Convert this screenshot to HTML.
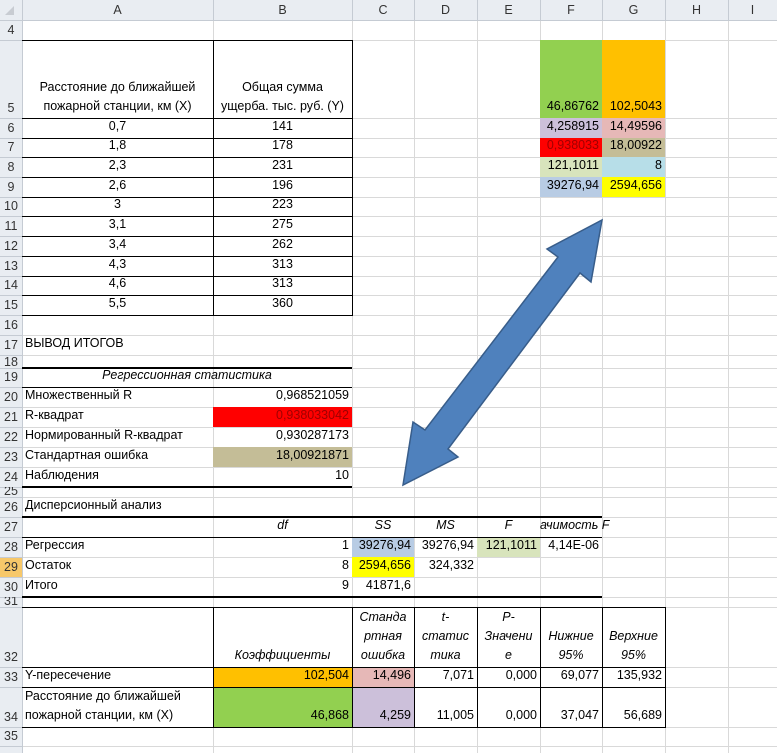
<!DOCTYPE html>
<html><head><meta charset="utf-8"><style>
*{margin:0;padding:0;box-sizing:border-box}
body{width:777px;height:753px;overflow:hidden;background:#fff;position:relative;font-family:"Liberation Sans",Calibri,sans-serif;font-size:12.5px;color:#000}
.c{position:absolute;display:flex;align-items:flex-end;padding:0 3px 2px 3px;white-space:nowrap;line-height:19px}
.r{justify-content:flex-end}.m{justify-content:center;text-align:center}.i{font-style:italic}
.f{position:absolute}
.h{position:absolute;color:#333;font-size:12.5px;display:flex;align-items:flex-end;justify-content:center;padding-bottom:2px;line-height:16px}
</style></head><body>
<svg class="f" style="left:0;top:0" width="777" height="753">
<g stroke="#d9d9d9" stroke-width="1">
<line x1="213.5" y1="20" x2="213.5" y2="753"/><line x1="352.5" y1="20" x2="352.5" y2="753"/><line x1="414.5" y1="20" x2="414.5" y2="753"/><line x1="477.5" y1="20" x2="477.5" y2="753"/><line x1="540.5" y1="20" x2="540.5" y2="753"/><line x1="602.5" y1="20" x2="602.5" y2="753"/><line x1="665.5" y1="20" x2="665.5" y2="753"/><line x1="728.5" y1="20" x2="728.5" y2="753"/>
<path d="M22 40.5H777M22 118.5H777M22 138.5H777M22 157.5H777M22 177.5H777M22 197.5H777M22 216.5H777M22 236.5H777M22 256.5H777M22 276.5H777M22 295.5H777M22 315.5H777M22 335.5H777M22 355.5H777M22 368.5H777M22 387.5H777M22 407.5H777M22 427.5H777M22 447.5H777M22 467.5H777M22 487.5H777M22 497.5H777M22 517.5H777M22 537.5H777M22 557.5H777M22 577.5H777M22 597.5H777M22 607.5H777M22 667.5H777M22 687.5H777M22 727.5H777M22 746.5H777"/>
</g>
<rect x="0" y="0" width="777" height="20" fill="#e9edf2"/>
<rect x="0" y="0" width="22" height="753" fill="#e9edf2"/>
<rect x="0" y="557" width="22" height="20" fill="#f7c86a"/>
<g stroke="#c5cbd3" stroke-width="1">
<line x1="0" y1="20.5" x2="777" y2="20.5"/><line x1="22.5" y1="0" x2="22.5" y2="753"/>
<path d="M213.5 0V20M352.5 0V20M414.5 0V20M477.5 0V20M540.5 0V20M602.5 0V20M665.5 0V20M728.5 0V20"/>
<path d="M0 40.5H22M0 118.5H22M0 138.5H22M0 157.5H22M0 177.5H22M0 197.5H22M0 216.5H22M0 236.5H22M0 256.5H22M0 276.5H22M0 295.5H22M0 315.5H22M0 335.5H22M0 355.5H22M0 368.5H22M0 387.5H22M0 407.5H22M0 427.5H22M0 447.5H22M0 467.5H22M0 487.5H22M0 497.5H22M0 517.5H22M0 537.5H22M0 557.5H22M0 577.5H22M0 597.5H22M0 607.5H22M0 667.5H22M0 687.5H22M0 727.5H22M0 746.5H22"/>
</g>
<path d="M14 6L14 15L5 15Z" fill="#c8ccd2"/>
<!-- fills -->
<rect x="540" y="40" width="62" height="78" fill="#92d050"/>
<rect x="602" y="40" width="63" height="78" fill="#ffc000"/>
<rect x="540" y="118" width="62" height="20" fill="#ccc0da"/>
<rect x="602" y="118" width="63" height="20" fill="#e6b8b7"/>
<rect x="540" y="138" width="62" height="19" fill="#ff0000"/>
<rect x="602" y="138" width="63" height="19" fill="#c4bd97"/>
<rect x="540" y="157" width="62" height="20" fill="#d8e4bc"/>
<rect x="602" y="157" width="63" height="20" fill="#b7dee8"/>
<rect x="540" y="177" width="62" height="20" fill="#b8cce4"/>
<rect x="602" y="177" width="63" height="20" fill="#ffff00"/>
<rect x="213" y="407" width="139" height="20" fill="#ff0000"/>
<rect x="213" y="447" width="139" height="20" fill="#c4bd97"/>
<rect x="352" y="537" width="62" height="20" fill="#b8cce4"/>
<rect x="352" y="557" width="62" height="20" fill="#ffff00"/>
<rect x="477" y="537" width="63" height="20" fill="#d8e4bc"/>
<rect x="213" y="667" width="139" height="20" fill="#ffc000"/>
<rect x="352" y="667" width="62" height="20" fill="#e6b8b7"/>
<rect x="213" y="687" width="139" height="40" fill="#92d050"/>
<rect x="352" y="687" width="62" height="40" fill="#ccc0da"/>
<!-- borders -->
<g stroke="#000" stroke-width="1" fill="none">
<path d="M22 40.5H352.5M22 118.5H352M22 138.5H352M22 157.5H352M22 177.5H352M22 197.5H352M22 216.5H352M22 236.5H352M22 256.5H352M22 276.5H352M22 295.5H352M22 315.5H352"/>
<path d="M213.5 40V316M352.5 40V316"/>
<path d="M22 387.5H352"/>
<path d="M22 537.5H602"/>
<path d="M22 607.5H665.5M22 667.5H665M22 687.5H665M22 727.5H665.5"/>
<path d="M213.5 607V728M352.5 607V728M414.5 607V728M477.5 607V728M540.5 607V728M602.5 607V728M665.5 607V728"/>
</g>
<g stroke="#000" stroke-width="2">
<path d="M22 368H352M22 487H352M22 517H602M22 597H602"/>
</g>
<polygon points="602,220 591,282 580,273 448,449 458,457 403,485 413,422 425,430 558,257 547,249" fill="#4f81bd" stroke="#385d8a" stroke-width="1.5" stroke-linejoin="miter"/>
</svg>

<!-- column headers -->
<div class="h" style="left:22px;top:0;width:191px;height:20px">A</div>
<div class="h" style="left:213px;top:0;width:139px;height:20px">B</div>
<div class="h" style="left:352px;top:0;width:62px;height:20px">C</div>
<div class="h" style="left:414px;top:0;width:63px;height:20px">D</div>
<div class="h" style="left:477px;top:0;width:63px;height:20px">E</div>
<div class="h" style="left:540px;top:0;width:62px;height:20px">F</div>
<div class="h" style="left:602px;top:0;width:63px;height:20px">G</div>
<div class="h" style="left:665px;top:0;width:63px;height:20px">H</div>
<div class="h" style="left:728px;top:0;width:49px;height:20px">I</div>
<!-- row headers -->
<div class="h" style="left:0;top:21px;width:22px;height:19px">4</div>
<div class="h" style="left:0;top:40px;width:22px;height:78px">5</div>
<div class="h" style="left:0;top:118px;width:22px;height:20px">6</div>
<div class="h" style="left:0;top:138px;width:22px;height:19px">7</div>
<div class="h" style="left:0;top:157px;width:22px;height:20px">8</div>
<div class="h" style="left:0;top:177px;width:22px;height:20px">9</div>
<div class="h" style="left:0;top:197px;width:22px;height:19px">10</div>
<div class="h" style="left:0;top:216px;width:22px;height:20px">11</div>
<div class="h" style="left:0;top:236px;width:22px;height:20px">12</div>
<div class="h" style="left:0;top:256px;width:22px;height:20px">13</div>
<div class="h" style="left:0;top:276px;width:22px;height:19px">14</div>
<div class="h" style="left:0;top:295px;width:22px;height:20px">15</div>
<div class="h" style="left:0;top:315px;width:22px;height:20px">16</div>
<div class="h" style="left:0;top:335px;width:22px;height:20px">17</div>
<div class="h" style="left:0;top:355px;width:22px;height:13px;padding-bottom:0;line-height:12px">18</div>
<div class="h" style="left:0;top:368px;width:22px;height:19px">19</div>
<div class="h" style="left:0;top:387px;width:22px;height:20px">20</div>
<div class="h" style="left:0;top:407px;width:22px;height:20px">21</div>
<div class="h" style="left:0;top:427px;width:22px;height:20px">22</div>
<div class="h" style="left:0;top:447px;width:22px;height:20px">23</div>
<div class="h" style="left:0;top:467px;width:22px;height:20px">24</div>
<div class="h" style="left:0;top:487px;width:22px;height:10px;padding:0;line-height:8px;overflow:hidden;align-items:flex-start">25</div>
<div class="h" style="left:0;top:497px;width:22px;height:20px">26</div>
<div class="h" style="left:0;top:517px;width:22px;height:20px">27</div>
<div class="h" style="left:0;top:537px;width:22px;height:20px">28</div>
<div class="h" style="left:0;top:557px;width:22px;height:20px">29</div>
<div class="h" style="left:0;top:577px;width:22px;height:20px">30</div>
<div class="h" style="left:0;top:597px;width:22px;height:10px;padding:0;line-height:8px;overflow:hidden;align-items:flex-start">31</div>
<div class="h" style="left:0;top:607px;width:22px;height:60px">32</div>
<div class="h" style="left:0;top:667px;width:22px;height:20px">33</div>
<div class="h" style="left:0;top:687px;width:22px;height:40px">34</div>
<div class="h" style="left:0;top:727px;width:22px;height:19px">35</div>

<!-- row 5 -->
<div class="c m" style="left:22px;top:40px;width:191px;height:78px">Расстояние до ближайшей<br>пожарной станции, км (X)</div>
<div class="c m" style="left:213px;top:40px;width:139px;height:78px">Общая сумма<br>ущерба. тыс. руб. (Y)</div>
<div class="c r" style="left:540px;top:40px;width:62px;height:78px">46,86762</div>
<div class="c r" style="left:602px;top:40px;width:63px;height:78px">102,5043</div>
<!-- data -->
<div class="c m" style="left:22px;top:118px;width:191px;height:20px">0,7</div><div class="c m" style="left:213px;top:118px;width:139px;height:20px">141</div>
<div class="c m" style="left:22px;top:138px;width:191px;height:19px">1,8</div><div class="c m" style="left:213px;top:138px;width:139px;height:19px">178</div>
<div class="c m" style="left:22px;top:157px;width:191px;height:20px">2,3</div><div class="c m" style="left:213px;top:157px;width:139px;height:20px">231</div>
<div class="c m" style="left:22px;top:177px;width:191px;height:20px">2,6</div><div class="c m" style="left:213px;top:177px;width:139px;height:20px">196</div>
<div class="c m" style="left:22px;top:197px;width:191px;height:19px">3</div><div class="c m" style="left:213px;top:197px;width:139px;height:19px">223</div>
<div class="c m" style="left:22px;top:216px;width:191px;height:20px">3,1</div><div class="c m" style="left:213px;top:216px;width:139px;height:20px">275</div>
<div class="c m" style="left:22px;top:236px;width:191px;height:20px">3,4</div><div class="c m" style="left:213px;top:236px;width:139px;height:20px">262</div>
<div class="c m" style="left:22px;top:256px;width:191px;height:20px">4,3</div><div class="c m" style="left:213px;top:256px;width:139px;height:20px">313</div>
<div class="c m" style="left:22px;top:276px;width:191px;height:19px">4,6</div><div class="c m" style="left:213px;top:276px;width:139px;height:19px">313</div>
<div class="c m" style="left:22px;top:295px;width:191px;height:20px">5,5</div><div class="c m" style="left:213px;top:295px;width:139px;height:20px">360</div>
<!-- F/G small table -->
<div class="c r" style="left:540px;top:118px;width:62px;height:20px">4,258915</div><div class="c r" style="left:602px;top:118px;width:63px;height:20px">14,49596</div>
<div class="c r" style="left:540px;top:138px;width:62px;height:19px;color:#a00000">0,938033</div><div class="c r" style="left:602px;top:138px;width:63px;height:19px">18,00922</div>
<div class="c r" style="left:540px;top:157px;width:62px;height:20px">121,1011</div><div class="c r" style="left:602px;top:157px;width:63px;height:20px">8</div>
<div class="c r" style="left:540px;top:177px;width:62px;height:20px">39276,94</div><div class="c r" style="left:602px;top:177px;width:63px;height:20px">2594,656</div>
<!-- summary -->
<div class="c" style="left:22px;top:335px;width:191px;height:20px">ВЫВОД ИТОГОВ</div>
<div class="c m i" style="left:22px;top:368px;width:330px;height:19px">Регрессионная статистика</div>
<div class="c" style="left:22px;top:387px;width:191px;height:20px">Множественный R</div><div class="c r" style="left:213px;top:387px;width:139px;height:20px">0,968521059</div>
<div class="c" style="left:22px;top:407px;width:191px;height:20px">R-квадрат</div><div class="c r" style="left:213px;top:407px;width:139px;height:20px;color:#a00000">0,938033042</div>
<div class="c" style="left:22px;top:427px;width:191px;height:20px">Нормированный R-квадрат</div><div class="c r" style="left:213px;top:427px;width:139px;height:20px">0,930287173</div>
<div class="c" style="left:22px;top:447px;width:191px;height:20px">Стандартная ошибка</div><div class="c r" style="left:213px;top:447px;width:139px;height:20px">18,00921871</div>
<div class="c" style="left:22px;top:467px;width:191px;height:20px">Наблюдения</div><div class="c r" style="left:213px;top:467px;width:139px;height:20px">10</div>
<!-- ANOVA -->
<div class="c" style="left:22px;top:497px;width:191px;height:20px">Дисперсионный анализ</div>
<div class="c m i" style="left:213px;top:517px;width:139px;height:20px">df</div>
<div class="c m i" style="left:352px;top:517px;width:62px;height:20px">SS</div>
<div class="c m i" style="left:414px;top:517px;width:63px;height:20px">MS</div>
<div class="c m i" style="left:477px;top:517px;width:63px;height:20px">F</div>
<div class="c i" style="left:538px;top:517px;width:80px;height:20px;padding-left:2px">ачимость F</div>
<div class="c" style="left:22px;top:537px;width:191px;height:20px">Регрессия</div><div class="c r" style="left:213px;top:537px;width:139px;height:20px">1</div><div class="c r" style="left:352px;top:537px;width:62px;height:20px">39276,94</div><div class="c r" style="left:414px;top:537px;width:63px;height:20px">39276,94</div><div class="c r" style="left:477px;top:537px;width:63px;height:20px">121,1011</div><div class="c r" style="left:540px;top:537px;width:62px;height:20px">4,14E-06</div>
<div class="c" style="left:22px;top:557px;width:191px;height:20px">Остаток</div><div class="c r" style="left:213px;top:557px;width:139px;height:20px">8</div><div class="c r" style="left:352px;top:557px;width:62px;height:20px">2594,656</div><div class="c r" style="left:414px;top:557px;width:63px;height:20px">324,332</div>
<div class="c" style="left:22px;top:577px;width:191px;height:20px">Итого</div><div class="c r" style="left:213px;top:577px;width:139px;height:20px">9</div><div class="c r" style="left:352px;top:577px;width:62px;height:20px">41871,6</div>
<!-- coefficients -->
<div class="c m i" style="left:213px;top:607px;width:139px;height:60px">Коэффициенты</div>
<div class="c m i" style="left:352px;top:607px;width:62px;height:60px;padding:0 0 2px 0">Станда<br>ртная<br>ошибка</div>
<div class="c m i" style="left:414px;top:607px;width:63px;height:60px;padding:0 0 2px 0">t-<br>статис<br>тика</div>
<div class="c m i" style="left:477px;top:607px;width:63px;height:60px;padding:0 0 2px 0">P-<br>Значени<br>е</div>
<div class="c m i" style="left:540px;top:607px;width:62px;height:60px;padding:0 0 2px 0">Нижние<br>95%</div>
<div class="c m i" style="left:602px;top:607px;width:63px;height:60px;padding:0 0 2px 0">Верхние<br>95%</div>
<div class="c" style="left:22px;top:667px;width:191px;height:20px">Y-пересечение</div><div class="c r" style="left:213px;top:667px;width:139px;height:20px">102,504</div><div class="c r" style="left:352px;top:667px;width:62px;height:20px">14,496</div><div class="c r" style="left:414px;top:667px;width:63px;height:20px">7,071</div><div class="c r" style="left:477px;top:667px;width:63px;height:20px">0,000</div><div class="c r" style="left:540px;top:667px;width:62px;height:20px">69,077</div><div class="c r" style="left:602px;top:667px;width:63px;height:20px">135,932</div>
<div class="c" style="left:22px;top:687px;width:191px;height:40px">Расстояние до ближайшей<br>пожарной станции, км (X)</div><div class="c r" style="left:213px;top:687px;width:139px;height:40px">46,868</div><div class="c r" style="left:352px;top:687px;width:62px;height:40px">4,259</div><div class="c r" style="left:414px;top:687px;width:63px;height:40px">11,005</div><div class="c r" style="left:477px;top:687px;width:63px;height:40px">0,000</div><div class="c r" style="left:540px;top:687px;width:62px;height:40px">37,047</div><div class="c r" style="left:602px;top:687px;width:63px;height:40px">56,689</div>
</body></html>
